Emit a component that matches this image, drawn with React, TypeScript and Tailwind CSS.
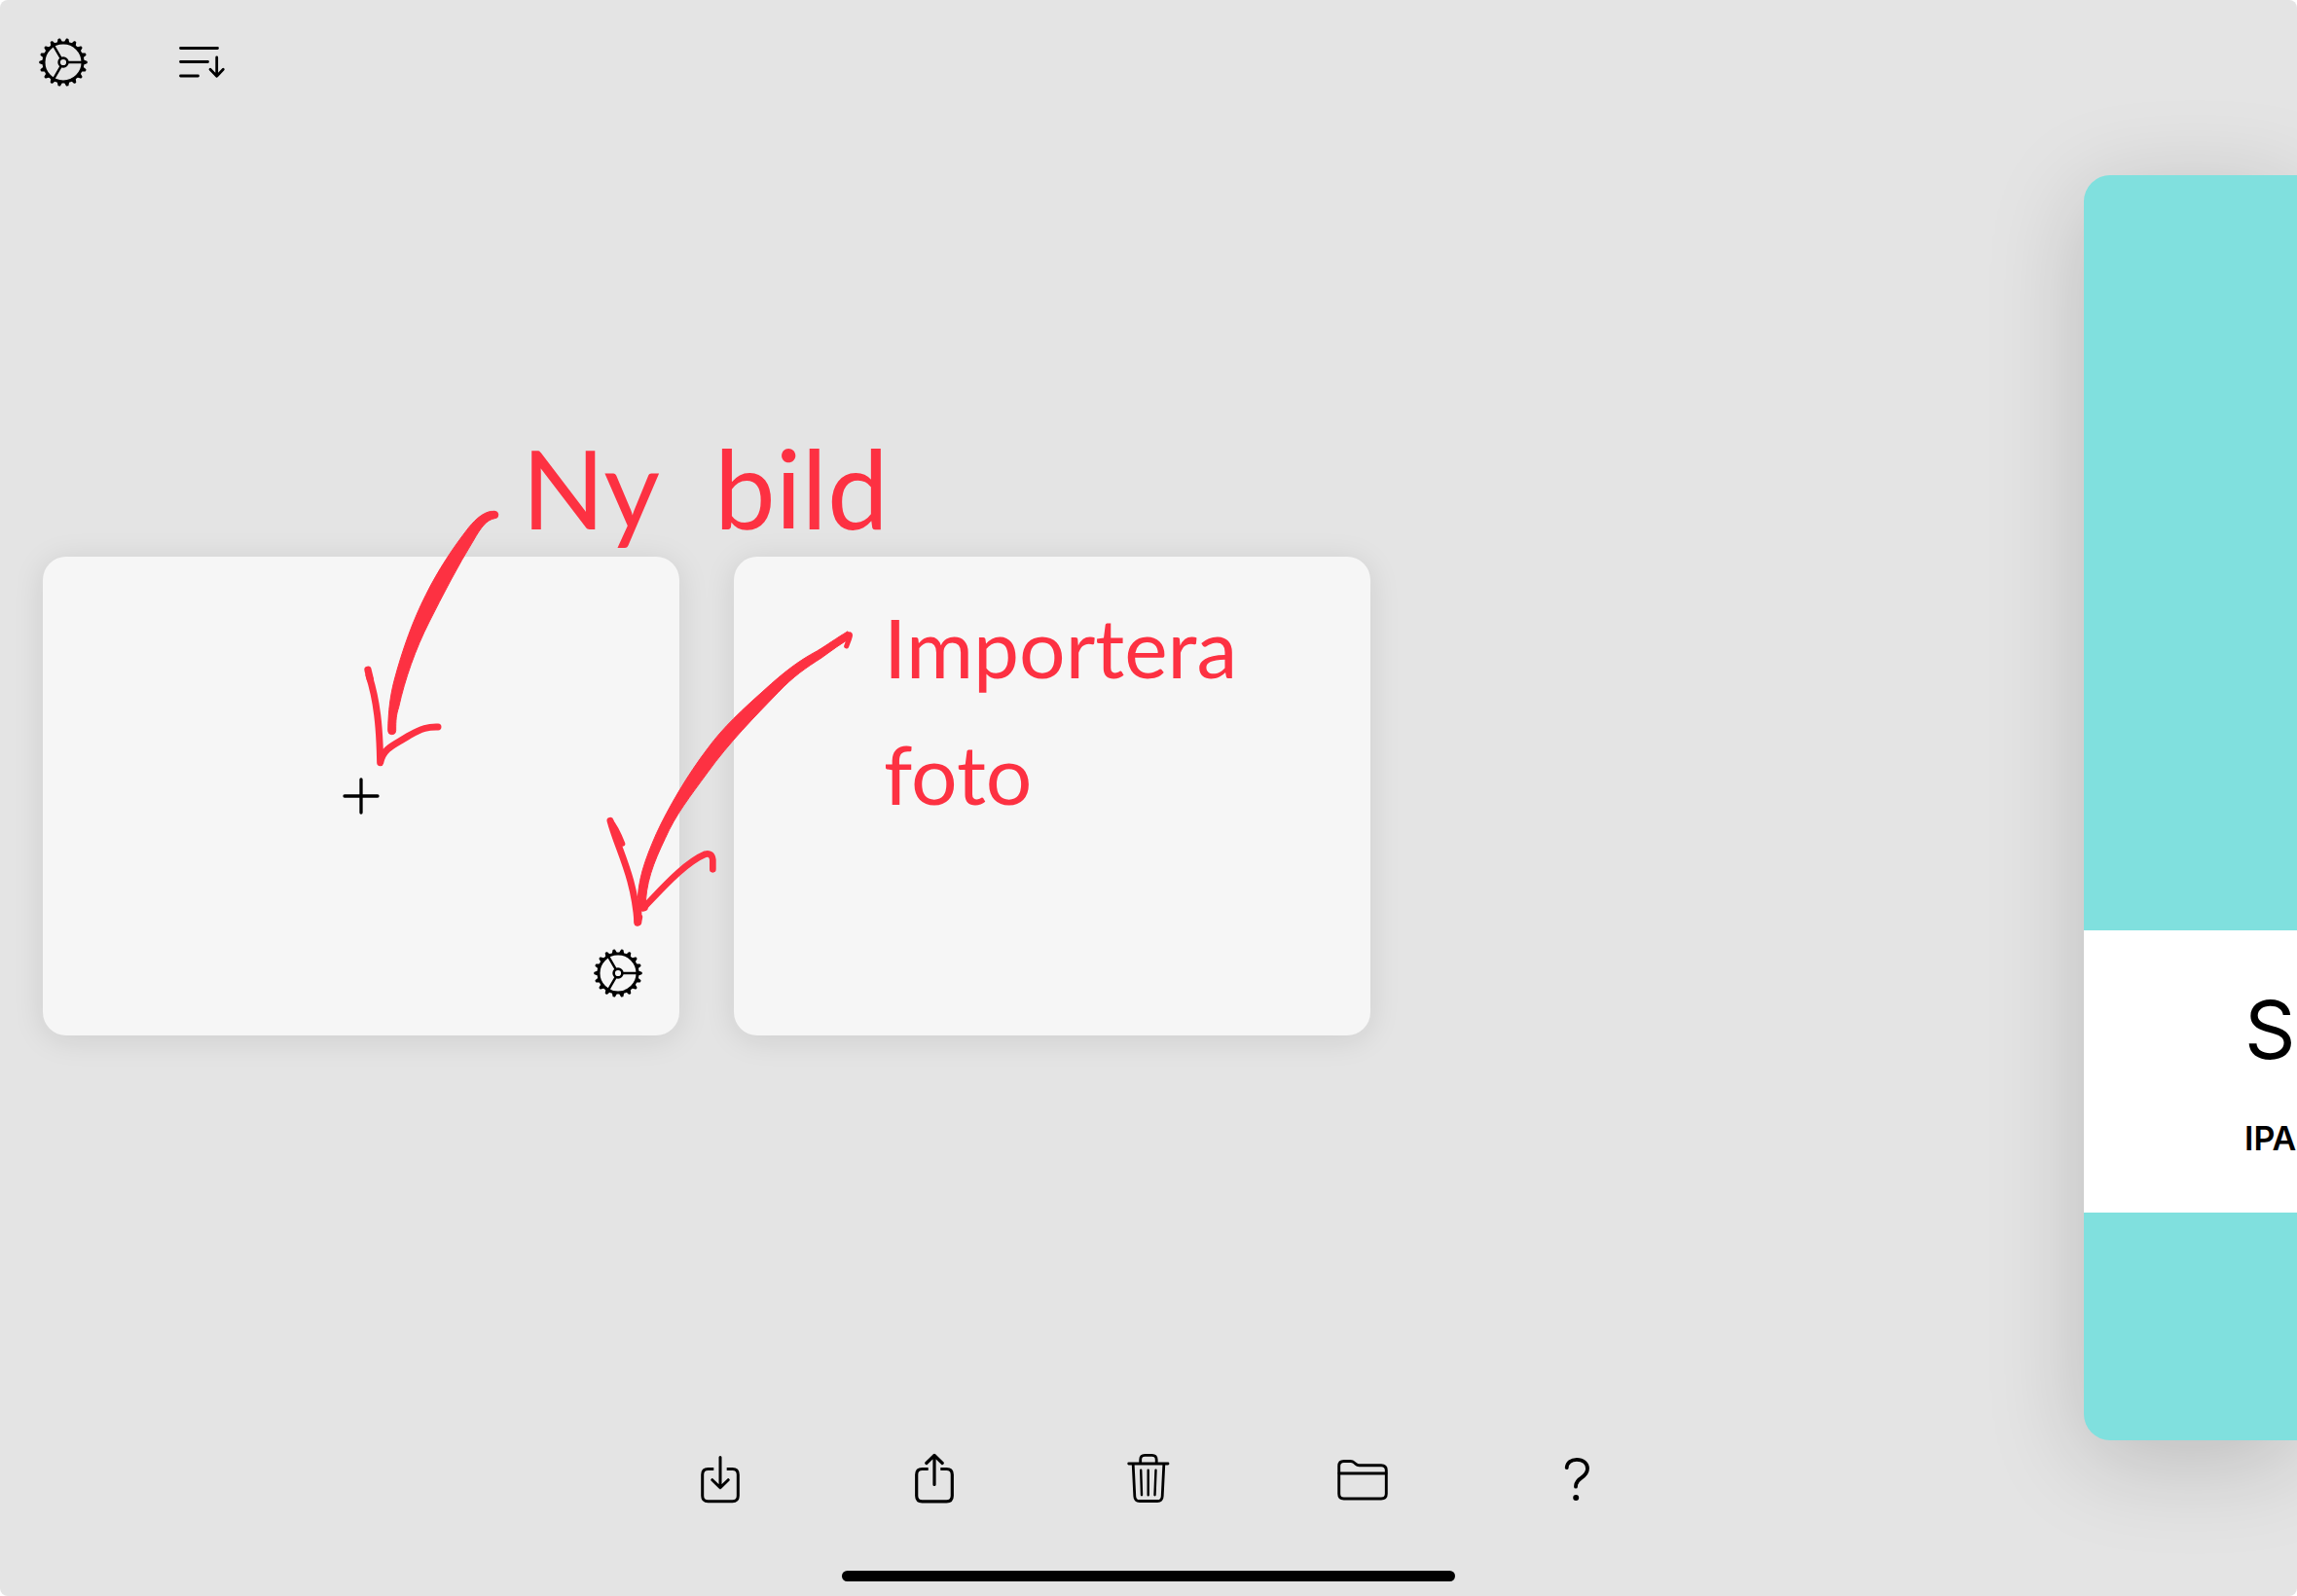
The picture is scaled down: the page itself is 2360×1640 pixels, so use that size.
import type { ReactNode } from "react";

const TEETH = Array.from({ length: 18 }, (_, i) => i * 20);
const SPOKES = [0, 120, 240];

function Icon({ children }: { children: ReactNode }) {
  return (
    <svg
      viewBox="-32 -32 64 64"
      className="size-16"
      fill="none"
      stroke="currentColor"
      strokeWidth="3"
      strokeLinecap="round"
      strokeLinejoin="round"
      aria-hidden="true"
    >
      {children}
    </svg>
  );
}

function GearIcon() {
  return (
    <Icon>
      <circle r="20" strokeWidth="3" />
      <circle r="4.4" strokeWidth="2.6" />
      {TEETH.map((a) => (
        <path key={a} d="M20.6 -1.9 L24 -0.6 V0.6 L20.6 1.9 Z" fill="currentColor" strokeWidth="1.5" transform={`rotate(${a})`} />
      ))}
      {SPOKES.map((a) => (
        <path key={a} d="M5 0H21" strokeWidth="2.5" transform={`rotate(${a})`} />
      ))}
    </Icon>
  );
}

function SortIcon() {
  return (
    <Icon>
      <path strokeWidth="2.8" d="M-21.5 -14.5H16.5M-21.5 -0.5H6.5M-21.5 14H-3.5M15.7 -5V14M9 7.3L15.7 14.2L22.3 7.3" />
    </Icon>
  );
}

function ImportIcon() {
  return (
    <Icon>
      <path strokeLinecap="butt" d="M-6.7 -10.5H-12.5Q-18.3 -10.5 -18.3 -4.7V17Q-18.3 22.8 -12.5 22.8H12.5Q18.3 22.8 18.3 17V-4.7Q18.3 -10.5 12.5 -10.5H6.7" />
      <path d="M0 -22.5V8.5M-8.2 0.7L0 8.7L8.2 0.7" />
    </Icon>
  );
}

function ShareIcon() {
  return (
    <Icon>
      <path strokeWidth="3.2" strokeLinecap="butt" d="M-6.3 -10.5H-12.5Q-18.3 -10.5 -18.3 -4.7V17Q-18.3 22.8 -12.5 22.8H12.5Q18.3 22.8 18.3 17V-4.7Q18.3 -10.5 12.5 -10.5H6.3" />
      <path strokeWidth="3.2" d="M0 5.5V-24.3M-8.2 -16.5L0 -24.5L8.2 -16.5" />
    </Icon>
  );
}

function TrashIcon() {
  return (
    <Icon>
      <path strokeWidth="2.8" d="M-20.3 -16H20M-8.3 -16.5V-20Q-8.3 -24.6 -3.8 -24.6H3.6Q8.2 -24.6 8.2 -20V-16.5M-15.8 -15L-14.2 17.5Q-14 22.5 -9.2 22.5H9.2Q14 22.5 14.2 17.5L15.8 -15" />
      <path strokeWidth="2.4" d="M-7.8 -9.3L-7 16.3M-0.3 -9.3V16.3M7.5 -9.3L6.5 16.3" />
    </Icon>
  );
}

function FolderIcon() {
  return (
    <Icon>
      <path strokeWidth="2.9" d="M-24.3 -13.5Q-24.3 -18.5 -19.3 -18.5H-12.5Q-10.2 -18.5 -8.6 -17L-7 -15.6Q-5.6 -14.3 -3.5 -14.3H19Q24.3 -14.3 24.3 -9.2V15Q24.3 20 19 20H-19.3Q-24.3 20 -24.3 15Z" />
      <path strokeWidth="2.8" d="M-24 -6H24" />
    </Icon>
  );
}

function HelpIcon() {
  return (
    <Icon>
      <path strokeWidth="3.8" d="M-10.3 -11.8C-9.8 -17 -5.8 -20.2 0 -20.2C6.6 -20.2 11 -16.5 11 -11C11 -6.4 8.4 -3.8 4.4 -1.2C0.4 1.4 -1 3.4 -1 7.7" />
      <circle cx="-0.8" cy="19" r="3" fill="currentColor" stroke="none" />
    </Icon>
  );
}

function PlusIcon() {
  return (
    <Icon>
      <path strokeWidth="3.3" d="M0 -17V17M-17 0H17" />
    </Icon>
  );
}

function IconButton({ label, children }: { label: string; children: ReactNode }) {
  return (
    <button type="button" aria-label={label} className="block size-16 shrink-0 text-black">
      {children}
    </button>
  );
}

/* Red marker arrows drawn over the two blank cards. */
function Arrows() {
  return (
    <svg
      viewBox="1020 1500 2100 1692"
      className="pointer-events-none absolute top-[-72px] left-[296px] h-[564px] w-[700px] overflow-visible"
      fill="none"
      stroke="#fd3142"
      strokeWidth="20"
      strokeLinecap="round"
      strokeLinejoin="round"
      aria-hidden="true"
    >
      <g transform="translate(1020 1500)">
        <path
          fill="#fd3142"
          strokeWidth="3"
          d="M504 76C476 73 448 98 425 126C378 186 330 258 292 335C254 410 221 500 195 598C183 645 177 690 176 752A11 11 0 0 0 200 752C200 720 201 705 209 680C228 594 260 502 303 417C344 336 390 246 440 165C462 126 480 102 505 98A11 11 0 0 0 504 76Z"
        />
        <path strokeWidth="22" d="M114 565L121 594" />
        <path strokeWidth="21" d="M117 582C142 660 150 740 152 851C162 805 195 797 240 768C280 745 300 740 330 741" />
      </g>
      <g transform="translate(1800 1800)">
        <path
          fill="#fd3142"
          strokeWidth="3"
          d="M812 147C775 169 750 188 718 207C660 238 615 273 555 328C490 386 428 443 383 505C318 590 260 690 223 770C188 850 162 920 166 1000L190 1004C188 926 214 860 250 785C282 712 327 655 382 580C445 492 525 410 598 335C645 285 685 258 732 228C765 204 795 182 822 167Z"
        />
        <path strokeWidth="15" d="M816 156Q824 152 818 168L809 192" />
        <path strokeWidth="16" d="M119 801Q98 748 81 730" />
        <path strokeWidth="21" d="M81 730C105 820 155 900 165 1045L170 1028" />
        <path strokeWidth="24" d="M166 1010V1042" />
        <path strokeWidth="22" d="M186 998L182 999" />
        <path strokeWidth="20" d="M186 996C240 940 310 860 374 833Q394 828 397 850V880" />
      </g>
    </svg>
  );
}

export default function App() {
  return (
    <div className="min-h-screen bg-white font-[Inter,sans-serif]">
      <div className="flex min-h-screen flex-col overflow-hidden rounded-lg bg-[#e4e4e4]">
        <header className="flex gap-[78px] px-[33px] pt-8 pb-[84px]">
          <IconButton label="Inställningar">
            <GearIcon />
          </IconButton>
          <IconButton label="Sortera">
            <SortIcon />
          </IconButton>
        </header>

        <main className="flex flex-1 justify-between">
          <section className="flex items-center pb-6 pl-11">
            <div className="relative flex gap-14">
              <div className="relative flex h-[492px] w-[654px] items-center justify-center rounded-3xl bg-[#f6f6f6] shadow-[0_4px_32px_rgba(0,0,0,0.1)]">
                <IconButton label="Ny">
                  <PlusIcon />
                </IconButton>
                <div className="absolute right-[31px] bottom-8">
                  <IconButton label="Kortinställningar">
                    <GearIcon />
                  </IconButton>
                </div>
              </div>
              <div className="h-[492px] w-[654px] rounded-3xl bg-[#f6f6f6] shadow-[0_4px_32px_rgba(0,0,0,0.1)]" />

              <Arrows />
              <p className="pointer-events-none absolute top-[-136px] left-[492px] flex gap-14 font-[Lato,sans-serif] text-[112px] leading-[130px] text-[#fd3142]">
                <span>Ny</span>
                <span>bild</span>
              </p>
              <p className="pointer-events-none absolute top-7 left-[864px] font-[Lato,sans-serif] text-[84px] leading-[130px] text-[#fd3142]">
                Importera
                <br />
                foto
              </p>
            </div>
          </section>

          <article className="flex w-[219px] shrink-0 flex-col rounded-l-[27px] bg-[#80e0de] shadow-[0_20px_100px_rgba(0,0,0,0.18)]">
            <div className="flex-1" />
            <div className="mb-[234px] h-[290px] overflow-hidden bg-white pt-[53px] pl-[165px] whitespace-nowrap text-black">
              <h1 className="text-[82px] leading-[100px]">S</h1>
              <p className="pt-9 text-[34px] leading-[50px] font-semibold">IPA</p>
            </div>
          </article>
        </main>

        <footer className="flex flex-col items-center gap-[62px] pt-2 pb-[15px]">
          <nav className="flex gap-[156px]" aria-label="Verktyg">
            <IconButton label="Importera">
              <ImportIcon />
            </IconButton>
            <IconButton label="Dela">
              <ShareIcon />
            </IconButton>
            <IconButton label="Radera">
              <TrashIcon />
            </IconButton>
            <IconButton label="Mapp">
              <FolderIcon />
            </IconButton>
            <IconButton label="Hjälp">
              <HelpIcon />
            </IconButton>
          </nav>
          <div className="h-[11px] w-[630px] rounded-full bg-black" />
        </footer>
      </div>
    </div>
  );
}
